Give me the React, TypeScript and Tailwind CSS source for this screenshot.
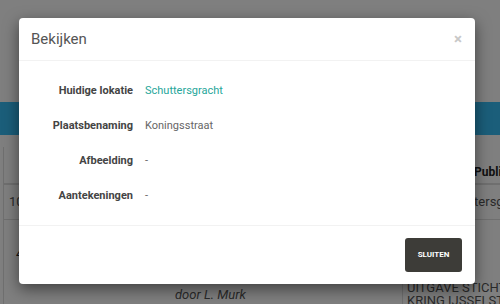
const rows = [
	{ label: "Huidige lokatie", value: "Schuttersgracht", link: true },
	{ label: "Plaatsbenaming", value: "Koningsstraat" },
	{ label: "Afbeelding", value: "-" },
	{ label: "Aantekeningen", value: "-" },
];

const App = () => {
	return (
		<div className="relative w-[500px] h-[304px] overflow-hidden bg-white font-['Roboto',sans-serif] text-[#333]">
			{/* page behind the dialog */}
			<div className="h-[102px]" />
			<div className="h-[33px] bg-[#36bdf4]" />
			<div className="ml-[3px] mt-[12px] border-l border-[#dedede] whitespace-nowrap">
				<div className="flex h-[38px] items-end border-b-2 border-[#dedede] pb-[2px]">
					<div className="w-[399px] shrink-0" />
					<div className="shrink-0 pl-[71px] text-[12px] font-bold text-[#222]">Publicatie</div>
				</div>
				<div className="flex h-[35px] border-b border-[#dedede] text-[13px] text-[#555]">
					<div className="flex w-[399px] shrink-0 items-center pl-[5px]">10</div>
					<div className="flex shrink-0 items-center pl-[38px]">Schuttersgracht</div>
				</div>
				<div className="flex h-[90px] text-[13px]">
					<div className="relative w-[399px] shrink-0 border-r border-[#dedede]">
						<div className="pl-[12px] pt-[24px] text-[#222]">4</div>
						<div className="absolute left-[171px] top-[65px] italic text-[#555]">door L. Murk</div>
					</div>
					<div className="shrink-0 pl-[4px] pt-[61px] leading-[13px] text-[#555]">
						<div>UITGAVE STICHTING</div>
						<div>KRING IJSSELSTEIN</div>
					</div>
				</div>
			</div>

			{/* backdrop */}
			<div className="absolute inset-0 bg-black/50" />

			{/* dialog */}
			<div className="absolute left-[19px] top-[18px] flex w-[456px] h-[266px] flex-col rounded-[4px] bg-white shadow-[0_5px_15px_rgba(0,0,0,0.5)]">
				<div className="flex h-[43px] items-center justify-between border-b border-[#f2f2f2] pl-[12px] pr-[13px]">
					<h4 className="text-[15px] text-[#555]">Bekijken</h4>
					<span className="text-[15px] font-bold leading-none text-[#c8c8c8]">×</span>
				</div>
				<div className="flex flex-1 flex-col pt-[13px]">
					{rows.map((r) => (
						<div key={r.label} className="flex h-[35px] items-center text-[11px]">
							<div className="w-[114px] text-right font-bold text-[#444]">{r.label}</div>
							<div className={"ml-[12px] " + (r.link ? "text-[#26a69a]" : "text-[#666]")}>{r.value}</div>
						</div>
					))}
				</div>
				<div className="flex h-[59px] items-center justify-end border-t border-[#f2f2f2] pr-[13px]">
					<button className="h-[34px] w-[57px] rounded-[3px] bg-[#3d3c38] text-[8px] font-bold text-white">SLUITEN</button>
				</div>
			</div>
		</div>
	);
};

export default App;
